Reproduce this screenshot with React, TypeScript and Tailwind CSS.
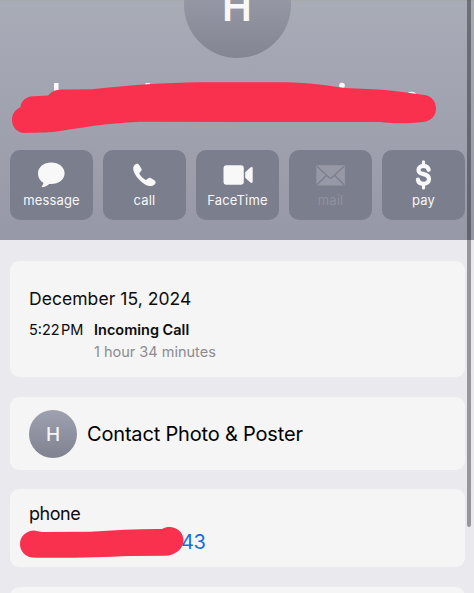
import React from 'react';

interface ActionButtonProps {
  label: string;
  disabled?: boolean;
  children: React.ReactNode;
}

interface CardProps {
  className?: string;
  children?: React.ReactNode;
}

const MessageIcon = () => (
  <svg width="28" height="26" viewBox="0 0 28 26" fill="currentColor">
    <path d="M13.200 0.400C5.800 0.400 0 5 0 11.200c0 4.300 2.300 7.700 5.400 9.600-.1 1.200-.7 2.300-1.500 3.200-.5.700-.1 1.300.7 1.200 2.700-.4 5.200-2 6.700-3.300.7.100 1.300.1 1.900.1 7.500 0 13.400-4.600 13.400-10.800S20.700.4 13.200.4z" />
  </svg>
);

const PhoneIcon = () => (
  <svg width="24" height="24" viewBox="0 0 24 24" fill="currentColor">
    <path d="M0.300 4.500C.600 2.700 2.200 1 3.600.7c1.100-.2 2 .4 2.600 1.300l2 3.300c.7 1.100.5 2.200-.3 3L6.800 9.600c-.5.500-.4 1.100 0 1.800 1.300 2 3.200 3.900 5.200 5.200.7.400 1.300.4 1.800 0l1.200-1c.9-.8 2-1 3-.4l3.400 2.100c1 .6 1.400 1.500 1.200 2.500-.4 1.800-2.300 3.300-4.600 3.300-3.500.1-8-2.600-11.500-6.200C2.800 13.200-.3 8.300.3 4.500z" />
  </svg>
);

const VideoIcon = () => (
  <svg width="30" height="20" viewBox="0 0 30 20" fill="currentColor">
    <rect x="0.500" y="0.200" width="20.300" height="19.600" rx="3" />
    <path d="M22.200 7.300l4.900-4.600c1.300-1.100 2.600-.8 2.600.7v13.200c0 1.500-1.300 1.800-2.600.7l-4.900-4.600z" />
  </svg>
);

const MailIcon = () => (
  <svg width="30" height="21" viewBox="0 0 30 21" className="text-[#9699a5]">
    <rect x="0.300" y="0.300" width="28.600" height="20.200" rx="1" fill="currentColor" />
    <path
      d="M1 1.200l11.700 11c1.100 1 2.500 1 3.600 0L28.100 1.200M1 19.800l9.600-9.500M28.100 19.800l-9.600-9.500"
      fill="none"
      stroke="#7b7e8d"
      strokeWidth="1.400"
    />
  </svg>
);

const DollarIcon = () => (
  <svg width="18" height="30" viewBox="0 0 18 30" fill="none" stroke="currentColor">
    <path d="M8.500 1.900v4M8.500 24v4" strokeWidth="3.200" strokeLinecap="round" />
    <path
      d="M13.700 9.800C13.100 7.300 11.400 6 8.500 6c-3 0-5 1.500-5 3.900 0 2.600 2 3.500 5.100 4.200 3.500.8 5.400 2 5.400 4.900 0 3-2.100 4.800-5.400 4.800S3.300 22.300 2.900 19.600"
      strokeWidth="4.200"
      strokeLinecap="round"
    />
  </svg>
);

const ActionButton: React.FC<ActionButtonProps> = ({ label, disabled = false, children }) => (
  <button
    disabled={disabled}
    className={`flex h-[70px] w-[83px] flex-col items-center rounded-[10px] bg-[#7b7e8d] ${
      disabled ? 'text-[#9093a0]' : 'text-[#f8f8f8]'
    }`}
  >
    <span className="mt-[9px] flex h-8 items-center justify-center">{children}</span>
    <span className="mt-px text-[13px] leading-4 tracking-[0.15px]">{label}</span>
  </button>
);

const Card: React.FC<CardProps> = ({ className = '', children }) => (
  <section className={`shrink-0 rounded-[9px] bg-[#f5f5f5] ${className}`}>{children}</section>
);

const App: React.FC = () => {
  return (
    <div className="relative flex h-[593px] w-[474px] flex-col overflow-hidden bg-[#e9e9ee] font-['Inter',sans-serif] text-[#0c0c0c]">
      <header className="relative flex h-[240px] shrink-0 flex-col items-center border-t border-[#a7aaad] bg-linear-to-b from-[#a8acb7] to-[#9798a7]">
        <div className="-mt-[50px] flex h-[107px] w-[107px] shrink-0 items-center justify-center rounded-full bg-linear-to-b from-[#a3a6b3] to-[#838592]">
          <span className="pt-[5px] text-[40px] leading-none font-semibold text-[#f8f8f8]">H</span>
        </div>

        {/* Redacted contact name */}
        <svg className="absolute top-[79px] left-0" width="474" height="60" viewBox="0 80 474 60">
          <g fill="#fafafa">
            <rect x="54" y="83" width="4.500" height="14" />
            <rect x="145.500" y="83" width="4.500" height="6" />
            <circle cx="342" cy="85.500" r="2.800" />
            <ellipse cx="411.500" cy="95" rx="5" ry="3.200" />
          </g>
          <path
            d="M25 133C17 133 12 127 12 120c0-6 3-10 8.500-13C21 101 26 96.500 33 96.300L48 95.400C52 91 56 89.700 62 89.500L92 89.300C130 85 165 82.800 200 82.300L285 82.300C310 83 325 85 345 88L378 89.500C398 91 412 93.500 426 95.300C432 97 436 102 436 108.500C436 116 431 121 423 122C408 123.800 395 123.800 380 122L140 121.800C105 123.500 80 128 60 131C50 132.600 40 132.600 25 133z"
            fill="#f9304e"
          />
        </svg>

        <nav className="mt-[92px] mr-[9px] ml-[10px] flex gap-[10px] self-stretch">
          <ActionButton label="message">
            <MessageIcon />
          </ActionButton>
          <ActionButton label="call">
            <PhoneIcon />
          </ActionButton>
          <ActionButton label="FaceTime">
            <VideoIcon />
          </ActionButton>
          <ActionButton label="mail" disabled>
            <MailIcon />
          </ActionButton>
          <ActionButton label="pay">
            <DollarIcon />
          </ActionButton>
        </nav>
      </header>

      <main className="flex flex-col pt-[21px] pr-[9px] pl-[10px]">
        <Card className="h-[116px] px-[19px] pt-[26px]">
          <h2 className="text-[17.500px] leading-6 tracking-[0.050px]">December 15, 2024</h2>
          <div className="mt-2 flex text-[14.500px] leading-[22px]">
            <span className="w-[65px] whitespace-nowrap">5:22&#8202;PM</span>
            <div>
              <p className="font-semibold">Incoming Call</p>
              <p className="text-[#8c8c8e]">1 hour 34 minutes</p>
            </div>
          </div>
        </Card>

        <Card className="mt-5 flex h-[73px] items-center px-[19px]">
          <div className="flex h-12 w-12 items-center justify-center rounded-full bg-linear-to-b from-[#9ea1af] to-[#808290]">
            <span className="pt-px text-[19px] leading-none font-medium text-[#f5f5f5]">H</span>
          </div>
          <span className="ml-[10px] text-[20px] tracking-[-0.180px] text-black">Contact Photo &amp; Poster</span>
        </Card>

        <Card className="relative mt-[19px] h-[78px] px-[19px] pt-[13px]">
          <p className="text-[18px] leading-6 tracking-[-0.450px]">phone</p>
          <p className="mt-1 pl-[152px] text-[20px] leading-6 tracking-[-0.300px] text-[#1070e0]">43</p>
          {/* Redacted digits */}
          <svg className="absolute top-[34px] left-[10px]" width="168" height="40" viewBox="20 523 168 40">
            <path
              d="M34 530.500L42 532L90 531.800C115 530 140 528.800 162 529C171 524 183 529 183.500 540C183.500 549 175 555.500 165 555.800L130 556C100 557.300 60 558.500 32 557.500C25 556.500 20 551 20 544C20 536.500 26 530.700 34 530.500z"
              fill="#f9304e"
            />
          </svg>
        </Card>

        <Card className="mt-[20px] h-[60px]" />
      </main>

      {/* Scroll indicator */}
      <div className="absolute top-0 right-[3px] h-[527px] w-1 rounded-b-full bg-black/35" />
    </div>
  );
};

export default App;
